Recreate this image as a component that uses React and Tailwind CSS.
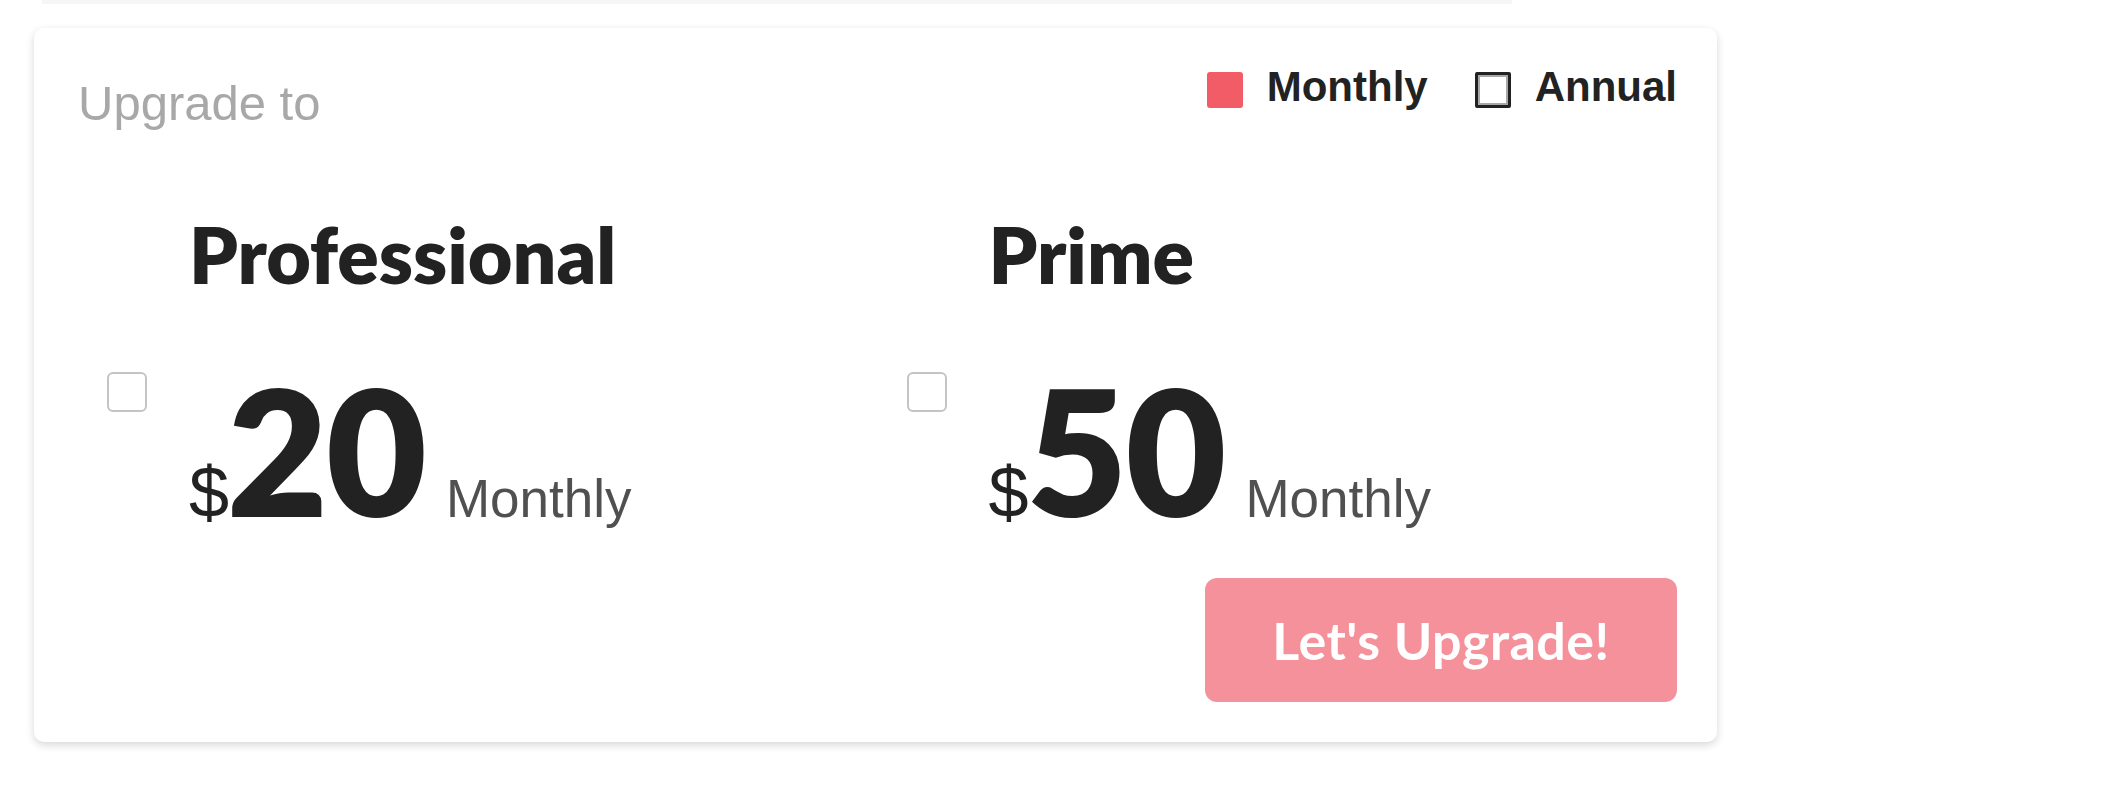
export default function App() {
  return (
    <div className="min-h-screen bg-white">
      <div className="ml-[42px] h-[4px] w-[1470px] bg-[#f5f6f8]" />
      <div className="ml-[34px] mt-[24px] w-[1683px] rounded-[10px] bg-white pl-[44px] pr-[40px] pt-[38px] pb-[40px] shadow-[0_3px_8px_rgba(0,0,0,0.16)]">
        <div className="flex items-start justify-between">
          <div className="mt-[13px] font-['Liberation_Sans',Arial,sans-serif] text-[49px] leading-none text-[#a8a8a8]">
            Upgrade to
          </div>
          <div className="flex items-start font-['Liberation_Sans',Arial,sans-serif] text-[42px] font-bold leading-none text-[#222]">
            <span className="mt-[6px] h-[36px] w-[36px] rounded-[3px] bg-[#f25c66]" />
            <span className="ml-[24px]">Monthly</span>
            <span className="ml-[47px] mt-[6px] h-[36px] w-[36px] rounded-[2px] border-[3px] border-[#222] bg-white shadow-[inset_0_0_0_2px_#a8a8a8]" />
            <span className="ml-[24px]">Annual</span>
          </div>
        </div>

        <div className="mt-[88px] grid grid-cols-2">
          {[
            { name: "Professional", price: "20" },
            { name: "Prime", price: "50" },
          ].map((p) => (
            <div key={p.name} className="flex">
              <div className="ml-[29px] mt-[156px] h-[40px] w-[40px] shrink-0 rounded-[6px] border-2 border-[#c4c4c4] bg-white" />
              <div className="ml-[42px]">
                <div className="font-['Lato',sans-serif] text-[77px] font-extrabold leading-none text-[#222]">
                  {p.name}
                </div>
                <div className="mt-[70px] flex items-baseline">
                  <span className="font-['Liberation_Sans',Arial,sans-serif] text-[72px] leading-none text-[#222]">
                    $
                  </span>
                  <span className="ml-[-2px] font-['Lato',sans-serif] text-[174px] font-extrabold leading-none tracking-[-2px] text-[#222]">
                    {p.price}
                  </span>
                  <span className="ml-[21px] font-['Liberation_Sans',Arial,sans-serif] text-[53px] leading-none text-[#505050]">
                    Monthly
                  </span>
                </div>
              </div>
            </div>
          ))}
        </div>

        <div className="mt-[41px] flex justify-end">
          <button className="h-[124px] w-[472px] rounded-[12px] bg-[#f5919a] font-['Lato',sans-serif] text-[52px] font-bold tracking-[0.5px] text-white">
            Let's Upgrade!
          </button>
        </div>
      </div>
    </div>
  );
}
